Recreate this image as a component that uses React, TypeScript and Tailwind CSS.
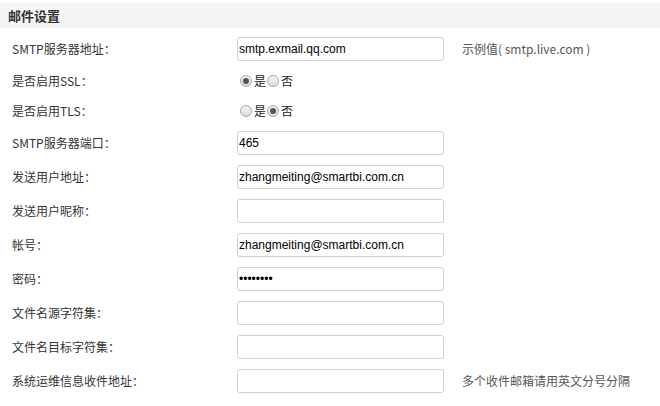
import React from 'react';

const cjk = "font-['Noto_Sans_CJK_SC',sans-serif]";
const latin = "font-['Liberation_Sans','Noto_Sans_CJK_SC',sans-serif]";

type Row =
  | { label: string; kind: 'text'; value?: string; hint?: string }
  | { label: string; kind: 'radio'; yes: boolean };

const rows: Row[] = [
  { label: 'SMTP服务器地址：', kind: 'text', value: 'smtp.exmail.qq.com', hint: '示例值( smtp.live.com )' },
  { label: '是否启用SSL：', kind: 'radio', yes: true },
  { label: '是否启用TLS：', kind: 'radio', yes: false },
  { label: 'SMTP服务器端口：', kind: 'text', value: '465' },
  { label: '发送用户地址：', kind: 'text', value: 'zhangmeiting@smartbi.com.cn' },
  { label: '发送用户昵称：', kind: 'text', value: '' },
  { label: '帐号：', kind: 'text', value: 'zhangmeiting@smartbi.com.cn' },
  { label: '密码：', kind: 'text', value: '••••••••' },
  { label: '文件名源字符集：', kind: 'text', value: '' },
  { label: '文件名目标字符集：', kind: 'text', value: '' },
  { label: '系统运维信息收件地址：', kind: 'text', value: '', hint: '多个收件邮箱请用英文分号分隔' },
];

function Radio({ checked }: { checked: boolean }) {
  return (
    <span className="w-[12px] h-[12px] rounded-full border border-[#a9a9a9] bg-gradient-to-b from-[#f4f4f4] to-[#dcdcdc] flex items-center justify-center">
      {checked && <span className="w-[6px] h-[6px] rounded-full bg-[#555]" />}
    </span>
  );
}

function Choice({ yes }: { yes: boolean }) {
  return (
    <div className={`flex items-center text-[12px] text-[#222] ${cjk} ml-[3px]`}>
      <Radio checked={yes} />
      <span className="ml-[2px] mr-[1px]">是</span>
      <Radio checked={!yes} />
      <span className="ml-[2px]">否</span>
    </div>
  );
}

export default function App() {
  return (
    <div className="w-[660px] h-[406px] bg-white pt-[3px] overflow-hidden">
      <div className={`h-[25px] bg-[#f5f5f5] flex items-center pl-[8px] text-[13px] font-bold text-[#333] ${cjk}`}>
        邮件设置
      </div>
      <div className="pt-[4px] pb-[8px] border-b border-[#eeeeee]">
        {rows.map((r) => (
          <div key={r.label} className={`flex items-center ${r.kind === 'radio' ? 'h-[30px]' : 'h-[34px]'}`}>
            <div className={`w-[237px] pl-[12px] text-[12px] leading-[16px] text-[#333] ${cjk}`}>{r.label}</div>
            {r.kind === 'radio' ? (
              <Choice yes={r.yes} />
            ) : (
              <>
                <input
                  readOnly
                  value={r.value}
                  className={`w-[207px] h-[24px] border border-[#d0d0d0] rounded-[3px] px-[1px] text-[12px] text-black outline-none ${latin}`}
                />
                {r.hint && (
                  <span className={`ml-[18px] text-[12px] text-[#555] ${cjk}`}>{r.hint}</span>
                )}
              </>
            )}
          </div>
        ))}
      </div>
    </div>
  );
}
